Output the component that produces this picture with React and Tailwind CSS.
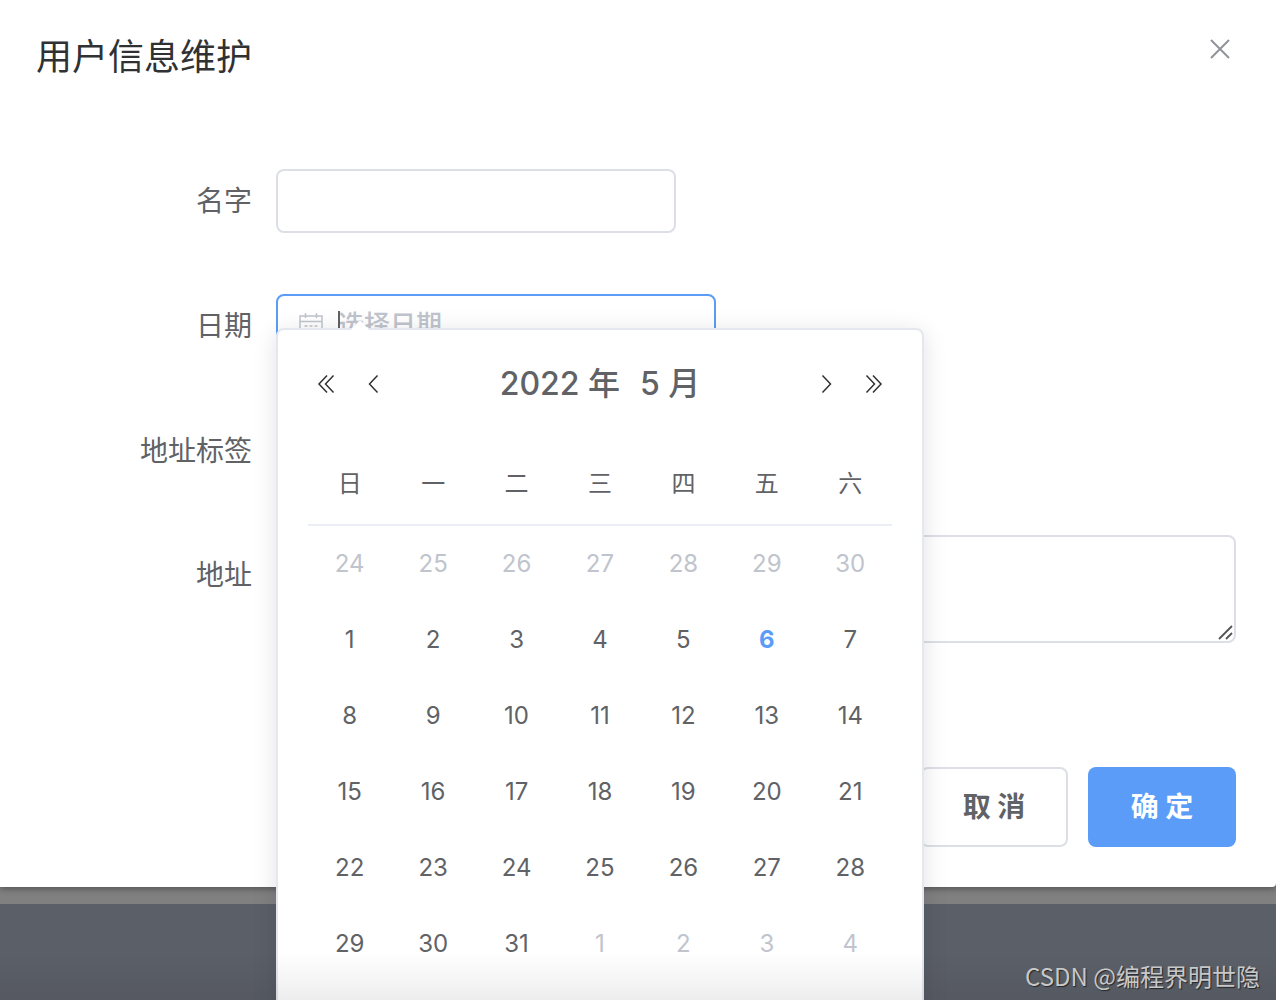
import React, { useState } from "react";

const WEEK_DAYS = ["日", "一", "二", "三", "四", "五", "六"];

const TODAY = { year: 2022, month: 5, day: 6 };

function buildWeeks(year, month) {
  // Always show at least one day of the previous month
  const lead = new Date(year, month - 1, 1).getDay() || 7;
  return Array.from({ length: 6 }, (_, w) =>
    Array.from({ length: 7 }, (_, d) => {
      const date = new Date(year, month - 1, 1 - lead + w * 7 + d);
      return { day: date.getDate(), current: date.getMonth() === month - 1 };
    })
  );
}

function CloseIcon() {
  return (
    <svg className="w-5 h-5" viewBox="0 0 20 20" fill="none" stroke="currentColor" strokeWidth="2">
      <path d="M1 1l18 18M19 1L1 19" />
    </svg>
  );
}

function CalendarIcon() {
  return (
    <svg className="w-6 h-6" viewBox="0 0 24 24" fill="none" stroke="currentColor" strokeWidth="1.5">
      <path d="M1 4h22v18H1zM1 9.5h22M6.5 1v5M17.5 1v5" />
      <path d="M5.5 14h3M10.5 14h3M15.5 14h3M5.5 18h3M10.5 18h3M15.5 18h3" />
    </svg>
  );
}

function Arrow({ double, right }) {
  return (
    <svg
      className={right ? "w-5 h-5 rotate-180" : "w-5 h-5"}
      viewBox="0 0 20 20"
      fill="none"
      stroke="currentColor"
      strokeWidth="1.5"
    >
      {double ? (
        <path d="M11 1.5L3 10l8 8.5M17.5 1.5L9.5 10l8 8.5" />
      ) : (
        <path d="M13.5 1.5L5.5 10l8 8.5" />
      )}
    </svg>
  );
}

function DatePanel() {
  const [view, setView] = useState({ year: 2022, month: 5 });
  const [picked, setPicked] = useState(null);

  function move(months) {
    const next = new Date(view.year, view.month - 1 + months, 1);
    setView({ year: next.getFullYear(), month: next.getMonth() + 1 });
    setPicked(null);
  }

  const isThisMonth = view.year === TODAY.year && view.month === TODAY.month;

  return (
    <div className="absolute left-0 top-[34px] z-10 w-[648px] rounded-lg border-2 border-[#e4e7ed] bg-white px-[30px] pb-8 shadow-[0_4px_24px_rgba(0,0,0,0.12)]">
      <svg className="absolute left-[70px] -top-[10px] w-6 h-3" viewBox="0 0 24 12">
        <path d="M1 12L10 2q2-2 4 0l9 10z" fill="#fff" />
      </svg>

      <div className="flex items-center h-[60px] mt-6 mb-[30px] text-[#303133]">
        <button type="button" aria-label="前一年" className="ml-2 w-5" onClick={() => move(-12)}><Arrow double /></button>
        <button type="button" aria-label="上个月" className="ml-7 w-5" onClick={() => move(-1)}><Arrow /></button>
        <div className="flex-1 flex justify-center gap-5 text-[32px] leading-[60px] font-medium text-[#606266]">
          <button type="button">{view.year} 年</button>
          <button type="button">{view.month} 月</button>
        </div>
        <button type="button" aria-label="下个月" className="mr-7 w-5" onClick={() => move(1)}><Arrow right /></button>
        <button type="button" aria-label="后一年" className="mr-2 w-5" onClick={() => move(12)}><Arrow double right /></button>
      </div>

      <table className="w-full table-fixed border-separate border-spacing-0 text-2xl text-center text-[#606266]">
        <thead>
          <tr>
            {WEEK_DAYS.map((d) => (
              <th key={d} className="h-[82px] p-0 font-normal border-b-2 border-[#ebeef5]">{d}</th>
            ))}
          </tr>
        </thead>
        <tbody>
          {buildWeeks(view.year, view.month).map((week, w) => (
            <tr key={w}>
              {week.map(({ day, current }, d) => {
                const isToday = isThisMonth && current && day === TODAY.day;
                return (
                  <td key={d} className="h-[76px] p-0">
                    <button
                      type="button"
                      onClick={() => setPicked(`${w}-${d}`)}
                      className={`w-12 h-12 rounded-full ${
                        isToday
                          ? "font-bold text-[#5a9cf8]"
                          : current
                          ? "text-[#606266]"
                          : "text-[#c0c4cc]"
                      } ${picked === `${w}-${d}` ? "bg-[#ecf5ff]" : ""}`}
                    >
                      {day}
                    </button>
                  </td>
                );
              })}
            </tr>
          ))}
        </tbody>
      </table>
    </div>
  );
}

export default function App() {
  return (
    <main className="relative min-h-screen flex flex-col overflow-hidden bg-[#808080] font-['Inter','Noto_Sans_CJK_SC',sans-serif] text-[#606266]">
      <section
        role="dialog"
        aria-labelledby="dialog-title"
        className="relative z-10 rounded-br bg-white pb-10 shadow-[0_2px_6px_rgba(0,0,0,0.35)]"
      >
        <header className="flex justify-between items-start pl-9 pr-[46px] pt-8">
          <h1 id="dialog-title" className="text-4xl leading-[50px] text-[#303133]">用户信息维护</h1>
          <button type="button" aria-label="关闭" className="mt-[7px] text-[#909399]"><CloseIcon /></button>
        </header>

        <form className="px-10 pt-[87px] text-[28px] leading-[64px]" onSubmit={(e) => e.preventDefault()}>
          <div className="flex gap-6 mb-[61px]">
            <label htmlFor="name" className="w-[212px] h-16 text-right">名字</label>
            <input id="name" type="text" className="w-[400px] h-16 px-7 rounded-lg border-2 border-[#dcdfe6] outline-none" />
          </div>

          <div className="flex gap-6 mb-[61px]">
            <label htmlFor="date" className="w-[212px] h-16 text-right">日期</label>
            <div className="relative w-[440px] h-16">
              <input
                id="date"
                type="text"
                placeholder="选择日期"
                className="block w-full h-16 pl-[60px] pr-7 pb-1 rounded-lg border-2 border-[#5a9cf8] text-[26px] leading-[56px] font-medium placeholder:text-[#c0c4cc] placeholder:opacity-100 outline-none"
              />
              <span className="absolute left-[23px] top-[18px] text-[#c0c4cc]"><CalendarIcon /></span>
              <span className="absolute left-[62px] top-[17px] w-0.5 h-8 bg-[#606266]" />
              <DatePanel />
            </div>
          </div>

          <div className="flex gap-6 mb-[52px]">
            <span className="w-[212px] h-16 text-right">地址标签</span>
          </div>

          <div className="flex gap-6">
            <label htmlFor="address" className="w-[212px] pt-2 text-right">地址</label>
            <div className="relative flex-1">
              <textarea id="address" className="block w-full h-[108px] px-7 rounded-lg border-2 border-[#dcdfe6] resize-none outline-none" />
              <svg className="absolute right-[3px] bottom-[3px] w-4 h-4" viewBox="0 0 16 16" stroke="#555" strokeWidth="1.8">
                <path d="M2 15L15 2M9 15l6-6" />
              </svg>
            </div>
          </div>
        </form>

        <footer className="flex justify-end gap-5 px-10 pt-[124px] text-[28px] font-bold">
          <button type="button" className="w-[148px] h-20 rounded-lg border-2 border-[#dcdfe6] bg-white">取 消</button>
          <button type="button" className="w-[148px] h-20 rounded-lg bg-[#5a9cf8] text-white">确 定</button>
        </footer>
      </section>

      <div className="mt-[17px] flex-1 flex items-end justify-end px-4 pb-2 bg-[#5b5f68]">
        <p className="relative z-30 text-2xl font-['Noto_Sans_CJK_SC',sans-serif] text-[#c8c8c8] [text-shadow:1px_1px_1px_rgba(0,0,0,0.6)]">
          CSDN @编程界明世隐
        </p>
      </div>

      <div className="absolute inset-x-0 bottom-0 z-20 h-12 pointer-events-none bg-linear-to-b from-transparent to-black/7" />
    </main>
  );
}
